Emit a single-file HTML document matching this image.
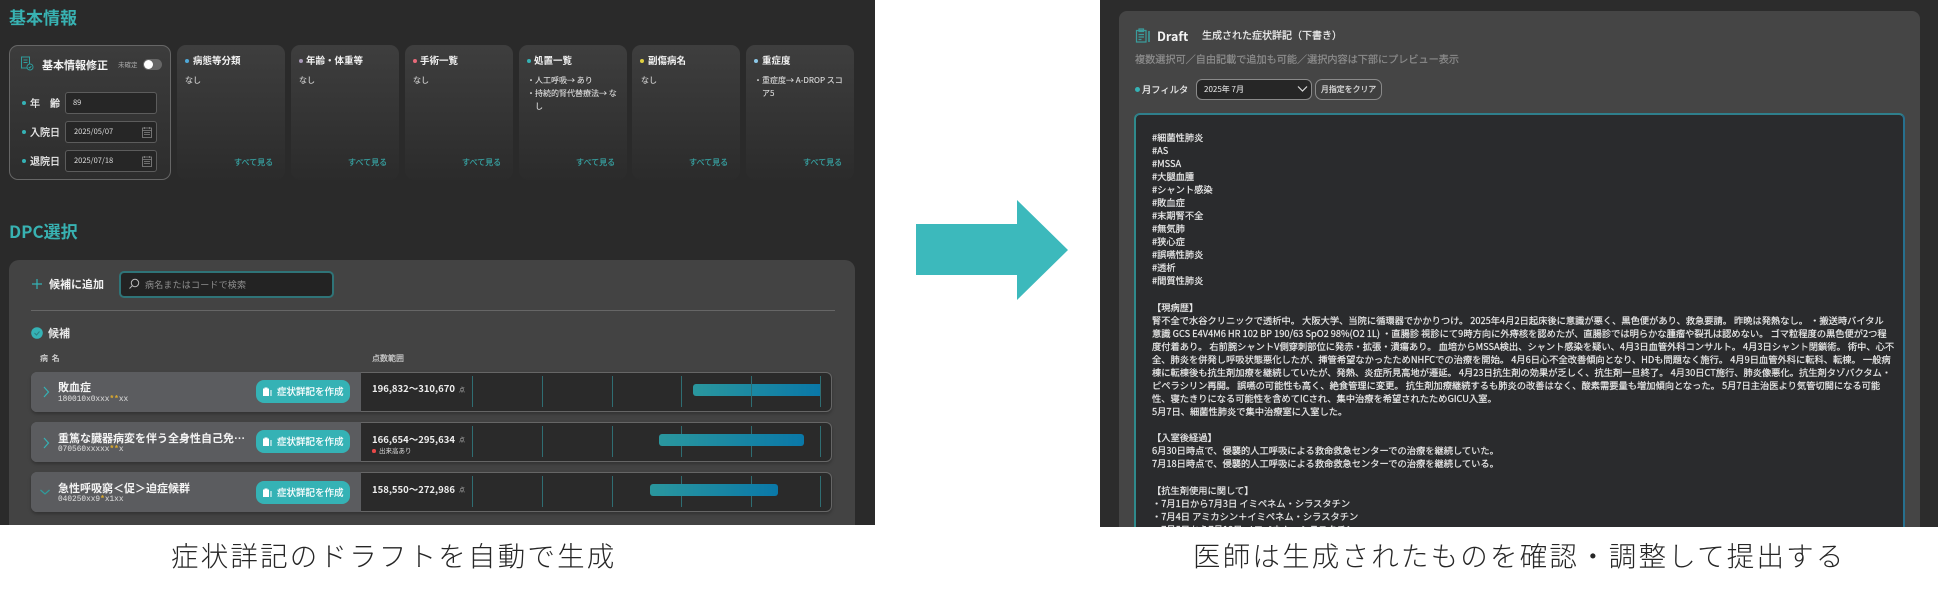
<!DOCTYPE html>
<html lang="ja"><head><meta charset="utf-8"><title>症状詳記</title>
<style>
*{box-sizing:border-box;margin:0;padding:0}
html,body{width:1950px;height:591px;background:#fff;overflow:hidden}
body{position:relative;font-family:"Noto Sans CJK JP","Liberation Sans",sans-serif;color:#eee;filter:blur(.3px)}
.a,.a *{position:absolute}
.t{white-space:nowrap;position:absolute}
.h{color:#38b2b2;font-weight:700;font-size:17px;line-height:20px}
.card{top:45px;width:108px;height:135px;border-radius:9px;background:linear-gradient(#3e3e3e,#2b2b2b)}
.dot{width:4px;height:4px;border-radius:50%}
.ct{top:53px;font-size:9.5px;font-weight:700;line-height:14px;color:#f2f2f2}
.cb{top:74px;font-size:8px;line-height:13px;color:#d0d0d0;-webkit-text-stroke:.12px currentColor}
.more{top:157px;font-size:8px;line-height:12px;color:#37a0a0;-webkit-text-stroke:.2px currentColor}
.lab{font-size:10px;line-height:14px;color:#eee;-webkit-text-stroke:.25px currentColor}
.inp{left:65px;width:92px;height:22px;background:#262626;border:1px solid #5c5c5c;border-radius:3px}
.val{font-size:7.5px;line-height:10px;color:#ddd}
.row{left:31px;width:801px;height:40px;border-radius:6px;background:#2a2a2a;border:1px solid #666;box-shadow:0 2px 3px rgba(0,0,0,.25)}
.rl{left:31px;width:330px;height:40px;border-radius:6px 0 0 6px;background:#5b5c5f}
.nm{left:58px;font-size:11px;font-weight:700;line-height:14px;color:#f4f4f4}
.cd{left:58px;font-family:"Liberation Mono",monospace;font-size:7.8px;line-height:10px;color:#d4d4d4;-webkit-text-stroke:.1px currentColor}
.cd b{position:static;color:#d8a830;font-weight:700}
.btn{left:256px;width:94px;height:23px;border-radius:8px;background:#35b2b5}
.bt{left:277px;font-size:9.5px;line-height:13px;color:#fff;-webkit-text-stroke:.2px currentColor}
.rg{left:372px;font-size:9.5px;font-weight:700;line-height:13px;color:#efefef}
.pt{left:459px;font-size:6px;line-height:8px;color:#bbb}
.tk{width:1px;height:31px;background:#2f6d72}
.bar{height:12px;border-radius:3px;background:linear-gradient(90deg,#2a979e,#0a78a8)}
.cap{top:535px;font-size:27.5px;line-height:38px;font-weight:300;color:#262626;letter-spacing:2.2px}
.tx{left:1152px;top:130.5px;font-size:9.25px;line-height:13.08px;color:#e8e8e8;white-space:pre;width:745px;height:396.5px;overflow:hidden;-webkit-text-stroke:.2px currentColor}
</style></head><body>
<div class="a" style="left:0;top:0;width:875px;height:525px;background:#2a2a2a">
 <div class="t h" style="left:9px;top:7px">基本情報</div>
 <div style="left:9px;top:45px;width:162px;height:135px;border:1px solid #666;border-radius:9px;background:linear-gradient(#3c3c3c,#2d2d2d)"></div>
 <svg style="left:20px;top:56px" width="15" height="15" viewBox="0 0 15 15" fill="none" stroke="#2f9c9c" stroke-width="1"><path d="M1.500 1h8v11h-8zM3.500 4h4M3.500 6.500h4"/><circle cx="10" cy="11" r="3" fill="#333"/><path d="M8.700 11l1 1 1.600-1.800"/></svg>
 <div class="t" style="left:42px;top:57px;font-size:11px;font-weight:700;line-height:16px;color:#f4f4f4">基本情報修正</div>
 <div class="t" style="left:118px;top:59px;font-size:6.500px;line-height:11px;color:#aaa">未確定</div>
 <div style="left:143px;top:59px;width:19px;height:11px;border-radius:6px;background:#666"></div>
 <div style="left:144px;top:60px;width:9px;height:9px;border-radius:50%;background:#fff"></div>

 <div class="dot" style="left:22px;top:101px;background:#35b2b5"></div><div class="t lab" style="left:30px;top:96px">年　齢</div>
 <div class="inp" style="top:92px"></div><div class="t val" style="left:73px;top:98px">89</div>
 <div class="dot" style="left:22px;top:130px;background:#35b2b5"></div><div class="t lab" style="left:30px;top:125px">入院日</div>
 <div class="inp" style="top:121px"></div><div class="t val" style="left:74px;top:127px">2025/05/07</div>
 <div class="dot" style="left:22px;top:159px;background:#35b2b5"></div><div class="t lab" style="left:30px;top:154px">退院日</div>
 <div class="inp" style="top:150px"></div><div class="t val" style="left:74px;top:156px">2025/07/18</div>
 <svg style="left:141px;top:126px" width="12" height="12" viewBox="0 0 12 12" fill="none" stroke="#888" stroke-width=".8"><path d="M1.500 2h9v9.500h-9zM1.500 4.500h9M3.500 1v2M8.500 1v2M3 6.500h6M3 8.500h6"/></svg>
 <svg style="left:141px;top:155px" width="12" height="12" viewBox="0 0 12 12" fill="none" stroke="#888" stroke-width=".8"><path d="M1.500 2h9v9.500h-9zM1.500 4.500h9M3.500 1v2M8.500 1v2M3 6.500h6M3 8.500h6"/></svg>

 <div class="card" style="left:177px"></div><div class="dot" style="left:185px;top:59px;background:#4fa8d8"></div><div class="t ct" style="left:193px">病態等分類</div><div class="t cb" style="left:185px">なし</div><div class="t more" style="left:234px">すべて見る</div>
 <div class="card" style="left:291px"></div><div class="dot" style="left:299px;top:59px;background:#a89ab8"></div><div class="t ct" style="left:306px">年齢・体重等</div><div class="t cb" style="left:299px">なし</div><div class="t more" style="left:348px">すべて見る</div>
 <div class="card" style="left:405px"></div><div class="dot" style="left:413px;top:59px;background:#e86a7a"></div><div class="t ct" style="left:420px">手術一覧</div><div class="t cb" style="left:413px">なし</div><div class="t more" style="left:462px">すべて見る</div>
 <div class="card" style="left:519px"></div><div class="dot" style="left:527px;top:59px;background:#35b2b5"></div><div class="t ct" style="left:534px">処置一覧</div>
 <div class="t cb" style="left:527px;color:#ddd">・人工呼吸→ あり<br>・持続的腎代替療法→ な<br>　し</div><div class="t more" style="left:576px">すべて見る</div>
 <div class="card" style="left:632px"></div><div class="dot" style="left:640px;top:59px;background:#e0d040"></div><div class="t ct" style="left:648px">副傷病名</div><div class="t cb" style="left:641px">なし</div><div class="t more" style="left:689px">すべて見る</div>
 <div class="card" style="left:746px"></div><div class="dot" style="left:754px;top:59px;background:#8cc8e8"></div><div class="t ct" style="left:762px">重症度</div>
 <div class="t cb" style="left:754px;color:#ddd">・重症度→ A-DROP スコ<br>　ア5</div><div class="t more" style="left:803px">すべて見る</div>

 <div class="t h" style="left:9px;top:221px">DPC選択</div>
 <div style="left:9px;top:260px;width:846px;height:265px;border-radius:10px 10px 0 0;background:#434343"></div>
 <svg style="left:31px;top:278px" width="12" height="12" viewBox="0 0 12 12" stroke="#35b2b5" stroke-width="1.200"><path d="M6 1v10M1 6h10"/></svg>
 <div class="t" style="left:49px;top:276px;font-size:11px;font-weight:700;line-height:16px;color:#f2f2f2">候補に追加</div>
 <div style="left:119px;top:271px;width:215px;height:27px;border-radius:5px;background:#232323;border:2px solid #2f7478"></div>
 <svg style="left:128px;top:278px" width="12" height="12" viewBox="0 0 12 12" fill="none" stroke="#bbb" stroke-width="1"><circle cx="7" cy="5" r="3.700"/><path d="M4.300 7.700L1.500 10.500"/></svg>
 <div class="t" style="left:145px;top:278px;font-size:9px;line-height:13px;color:#8f8f8f;letter-spacing:.2px">病名またはコードで検索</div>
 <div style="left:31px;top:310px;width:804px;height:1px;background:#666"></div>
 <svg style="left:31px;top:327px" width="12" height="12" viewBox="0 0 12 12"><circle cx="6" cy="6" r="5.800" fill="#35b2b5"/><path d="M3.500 6l2 2 3-3.500" fill="none" stroke="#2f7f80" stroke-width="1"/></svg>
 <div class="t" style="left:48px;top:326px;font-size:11px;font-weight:700;line-height:15px;color:#e8e8e8">候補</div>
 <div class="t" style="left:40px;top:353px;font-size:8px;font-weight:700;line-height:12px;color:#ccc">病&nbsp;&nbsp;名</div>
 <div class="t" style="left:372px;top:353px;font-size:8px;line-height:12px;color:#ccc;-webkit-text-stroke:.2px currentColor">点数範囲</div>

 <!-- row 1 -->
 <div class="row" style="top:372px"></div><div class="rl" style="top:372px"></div>
 <svg style="left:42px;top:386px" width="8" height="12" viewBox="0 0 8 12" fill="none" stroke="#35b2b5" stroke-width="1.200"><path d="M2 1l4.500 5L2 11"/></svg>
 <div class="t nm" style="top:380px">敗血症</div><div class="t cd" style="top:395px">180010x0xxx<b>**</b>xx</div>
 <div class="btn" style="top:380px"></div><div class="t bt" style="top:385px">症状詳記を作成</div>
 <svg style="left:263px;top:387px" width="10" height="9" viewBox="0 0 10 9" fill="#fff"><path d="M0 1.500h1.500V.5h3v1H6V9H0zM7.500 3h1v6h-1z"/></svg>
 <div class="t rg" style="top:382px">196,832〜310,670</div><div class="t pt" style="top:386px">点</div>
 <div class="tk" style="left:472px;top:376px"></div><div class="tk" style="left:542px;top:376px"></div><div class="tk" style="left:612px;top:376px"></div><div class="tk" style="left:681px;top:376px"></div><div class="tk" style="left:820px;top:376px"></div>
 <div class="bar" style="left:693px;top:384px;width:127px;border-radius:3px 0 0 3px"></div><div class="tk" style="left:751px;top:376px"></div>

 <!-- row 2 -->
 <div class="row" style="top:422px"></div><div class="rl" style="top:422px"></div>
 <svg style="left:42px;top:437px" width="8" height="12" viewBox="0 0 8 12" fill="none" stroke="#35b2b5" stroke-width="1.200"><path d="M2 1l4.500 5L2 11"/></svg>
 <div class="t nm" style="top:431px;width:190px;overflow:hidden;text-overflow:ellipsis">重篤な臓器病変を伴う全身性自己免疫疾患</div><div class="t cd" style="top:445px">070560xxxxx<b>**</b>x</div>
 <div class="btn" style="top:430px"></div><div class="t bt" style="top:435px">症状詳記を作成</div>
 <svg style="left:263px;top:437px" width="10" height="9" viewBox="0 0 10 9" fill="#fff"><path d="M0 1.500h1.500V.5h3v1H6V9H0zM7.500 3h1v6h-1z"/></svg>
 <div class="t rg" style="top:433px">166,654〜295,634</div><div class="t pt" style="top:436px">点</div>
 <div class="dot" style="left:372px;top:449px;width:3.500px;height:3.500px;background:#e84848"></div><div class="t" style="left:379px;top:445px;font-size:6.500px;line-height:11px;color:#ddd">出来高あり</div>
 <div class="tk" style="left:472px;top:426px"></div><div class="tk" style="left:542px;top:426px"></div><div class="tk" style="left:612px;top:426px"></div><div class="tk" style="left:820px;top:426px"></div><div class="tk" style="left:681px;top:426px"></div><div class="tk" style="left:751px;top:426px"></div>
 <div class="bar" style="left:659px;top:434px;width:145px"></div>

 <!-- row 3 -->
 <div class="row" style="top:472px"></div><div class="rl" style="top:472px"></div>
 <svg style="left:39px;top:488px" width="12" height="8" viewBox="0 0 12 8" fill="none" stroke="#2f9c9c" stroke-width="1.200"><path d="M1.500 2L6 6l4.500-4"/></svg>
 <div class="t nm" style="top:481px">急性呼吸窮＜促＞迫症候群</div><div class="t cd" style="top:495px">040250xx9<b>*</b>x1xx</div>
 <div class="btn" style="top:481px"></div><div class="t bt" style="top:486px">症状詳記を作成</div>
 <svg style="left:263px;top:488px" width="10" height="9" viewBox="0 0 10 9" fill="#fff"><path d="M0 1.500h1.500V.5h3v1H6V9H0zM7.500 3h1v6h-1z"/></svg>
 <div class="t rg" style="top:483px">158,550〜272,986</div><div class="t pt" style="top:486px">点</div>
 <div class="tk" style="left:472px;top:476px"></div><div class="tk" style="left:542px;top:476px"></div><div class="tk" style="left:612px;top:476px"></div><div class="tk" style="left:820px;top:476px"></div><div class="tk" style="left:681px;top:476px"></div><div class="tk" style="left:751px;top:476px"></div>
 <div class="bar" style="left:650px;top:484px;width:128px"></div>
</div>

<svg class="a" style="left:916px;top:200px" width="152" height="100" viewBox="0 0 152 100"><path d="M0 24h101V0l51 50-51 50V75H0z" fill="#3cb9bc"/></svg>

<div class="a" style="left:1100px;top:0;width:838px;height:527px;background:#2c2c2c"></div>
<div class="a" style="left:1119px;top:11px;width:801px;height:516px;border-radius:8px 8px 0 0;background:#454545"></div>
<div class="a" style="left:0;top:0">
 <svg style="left:1135px;top:28px" width="16" height="15" viewBox="0 0 16 15" fill="none" stroke="#3a9c9c" stroke-width="1.200"><path d="M1.500 2.500h9.500v11.500H1.500zM4 1h4.500v2.500H4zM3.500 6.500h5.500M3.500 9h5.500M3.500 11.500h3"/><path d="M14 3v11" stroke-width="1.600"/></svg>
 <div class="t" style="left:1157px;top:27px;font-size:12.500px;font-weight:700;line-height:18px;color:#f4f4f4">Draft</div>
 <div class="t" style="left:1202px;top:28px;font-size:10px;line-height:14px;color:#eee;-webkit-text-stroke:.2px currentColor">生成された症状詳記（下書き）</div>
 <div class="t" style="left:1135px;top:51px;font-size:10.150px;line-height:15px;color:#8d8d8d;-webkit-text-stroke:.2px currentColor">複数選択可／自由記載で追加も可能／選択内容は下部にプレビュー表示</div>
 <div class="dot" style="left:1135px;top:87px;width:5px;height:5px;background:#35b2b5"></div>
 <div class="t" style="left:1142px;top:82px;font-size:9.300px;line-height:14px;color:#eee;-webkit-text-stroke:.2px currentColor">月フィルタ</div>
 <div style="left:1196px;top:79px;width:116px;height:21px;border-radius:6px;background:#262626;border:1px solid #8a8a8a"></div>
 <div class="t" style="left:1204px;top:84px;font-size:8px;line-height:11px;color:#ddd;-webkit-text-stroke:.1px currentColor">2025年 7月</div>
 <svg style="left:1297px;top:85px" width="11" height="8" viewBox="0 0 11 8" fill="none" stroke="#ddd" stroke-width="1.200"><path d="M1 1.500l4.500 4.500L10 1.500"/></svg>
 <div style="left:1315px;top:79px;width:67px;height:21px;border-radius:7px;background:#3f3f3f;border:1px solid #8a8a8a"></div>
 <div class="t" style="left:1321px;top:84px;font-size:7.900px;line-height:11px;color:#ddd;-webkit-text-stroke:.2px currentColor">月指定をクリア</div>
 <div style="left:1134px;top:113px;width:771px;height:414px;border-radius:6px 6px 0 0;background:#2a2b2d;border:2px solid;border-bottom:0;border-color:#2f7f8c #27708e #27708e #2f8a8c"></div>
 <div class="tx">#細菌性肺炎
#AS
#MSSA
#大腿血腫
#シャント感染
#敗血症
#末期腎不全
#無気肺
#狭心症
#誤嚥性肺炎
#透析
#間質性肺炎

【現病歴】
腎不全で水谷クリニックで透析中。 大阪大学、当院に循環器でかかりつけ。 2025年4月2日起床後に意識が悪く、黒色便があり、救急要請。 昨晩は発熱なし。 ・搬送時バイタル
意識 GCS E4V4M6 HR 102 BP 190/63 SpO2 98%(O2 1L) ・直腸診 視診にて9時方向に外痔核を認めたが、直腸診では明らかな腫瘤や裂孔は認めない。 ゴマ粒程度の黒色便が2つ程
度付着あり。 右前腕シャントV側穿刺部位に発赤・拡張・潰瘍あり。 血培からMSSA検出、シャント感染を疑い、4月3日血管外科コンサルト。 4月3日シャント閉鎖術。 術中、心不
全、肺炎を併発し呼吸状態悪化したが、挿管希望なかったためNHFCでの治療を開始。 4月6日心不全改善傾向となり、HDも問題なく施行。 4月9日血管外科に転科、転棟。 一般病
棟に転棟後も抗生剤加療を継続していたが、発熱、炎症所見高地が遷延。 4月23日抗生剤の効果が乏しく、抗生剤一旦終了。 4月30日CT施行、肺炎像悪化。抗生剤タゾバクタム・
ピペラシリン再開。 誤嚥の可能性も高く、絶食管理に変更。 抗生剤加療継続するも肺炎の改善はなく、酸素需要量も増加傾向となった。 5月7日主治医より気管切開になる可能
性、寝たきりになる可能性を含めてICされ、集中治療を希望されたためGICU入室。
5月7日、細菌性肺炎で集中治療室に入室した。

【入室後経過】
6月30日時点で、侵襲的人工呼吸による救命救急センターでの治療を継続していた。
7月18日時点で、侵襲的人工呼吸による救命救急センターでの治療を継続している。

【抗生剤使用に関して】
・7月1日から7月3日 イミペネム・シラスタチン
・7月4日 アミカシン＋イミペネム・シラスタチン
・7月5日から7月18日 メロペネム・シラスタチン</div>
</div>

<div class="t cap" style="left:171px">症状詳記のドラフトを自動で生成</div>
<div class="t cap" style="left:1193px">医師は生成されたものを確認・調整して提出する</div>
</body></html>
